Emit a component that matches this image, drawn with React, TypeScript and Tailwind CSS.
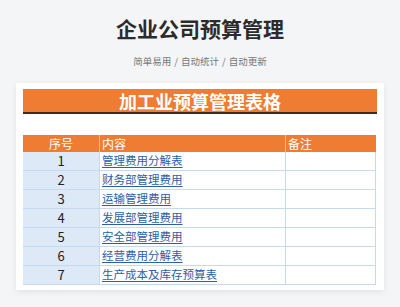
const rows = [
  "管理费用分解表",
  "财务部管理费用",
  "运输管理费用",
  "发展部管理费用",
  "安全部管理费用",
  "经营费用分解表",
  "生产成本及库存预算表",
];

const font = { fontFamily: '"Noto Sans CJK SC", "Noto Sans", sans-serif' };

export default function App() {
  return (
    <div className="h-[307px] w-[400px] overflow-hidden bg-[#f4f5f7]" style={font}>
      <div className="pt-[13px] text-center text-[21px] font-bold leading-[30px] text-[#2b2b2b]">
        企业公司预算管理
      </div>
      <div className="mt-[10px] text-center text-[9.5px] leading-[16px] text-[#777]">
        简单易用<span className="mx-[3px]">/</span>自动统计<span className="mx-[3px]">/</span>自动更新
      </div>

      <div className="mx-[16px] mt-[14px] h-[207px] bg-white px-[7px] pt-[6px] shadow-[0_2px_6px_rgba(0,0,0,0.08)]">
        <div className="flex h-[23px] items-center justify-center bg-[#ee7d33] text-[18px] font-bold leading-none text-white">
          加工业预算管理表格
        </div>
        <div className="h-[2px] bg-[#3d2b1f]" />
        <div className="mt-[21px] grid grid-cols-[77px_186px_90px] text-[12px]">
          <div className="flex h-[17px] items-center justify-center border-r border-[#f6b88d] bg-[#ee7d33] text-white">
            序号
          </div>
          <div className="flex h-[17px] items-center border-r border-[#f6b88d] bg-[#ee7d33] pl-[2px] text-white">
            内容
          </div>
          <div className="flex h-[17px] items-center bg-[#ee7d33] pl-[2px] text-white">备注</div>
          {rows.map((r, i) => (
            <div key={r} className="contents">
              <div className="flex h-[19px] items-center justify-center border-r border-b border-[#c7d9ec] bg-[#dde9f6] text-[13px] text-[#222]">
                {i + 1}
              </div>
              <div className="flex h-[19px] items-center border-r border-b border-[#c7d9ec] pl-[2px] text-[11.5px] text-[#2f5ea8] underline underline-offset-2">
                {r}
              </div>
              <div className="h-[19px] border-r border-b border-[#c7d9ec]" />
            </div>
          ))}
        </div>
      </div>
    </div>
  );
}
